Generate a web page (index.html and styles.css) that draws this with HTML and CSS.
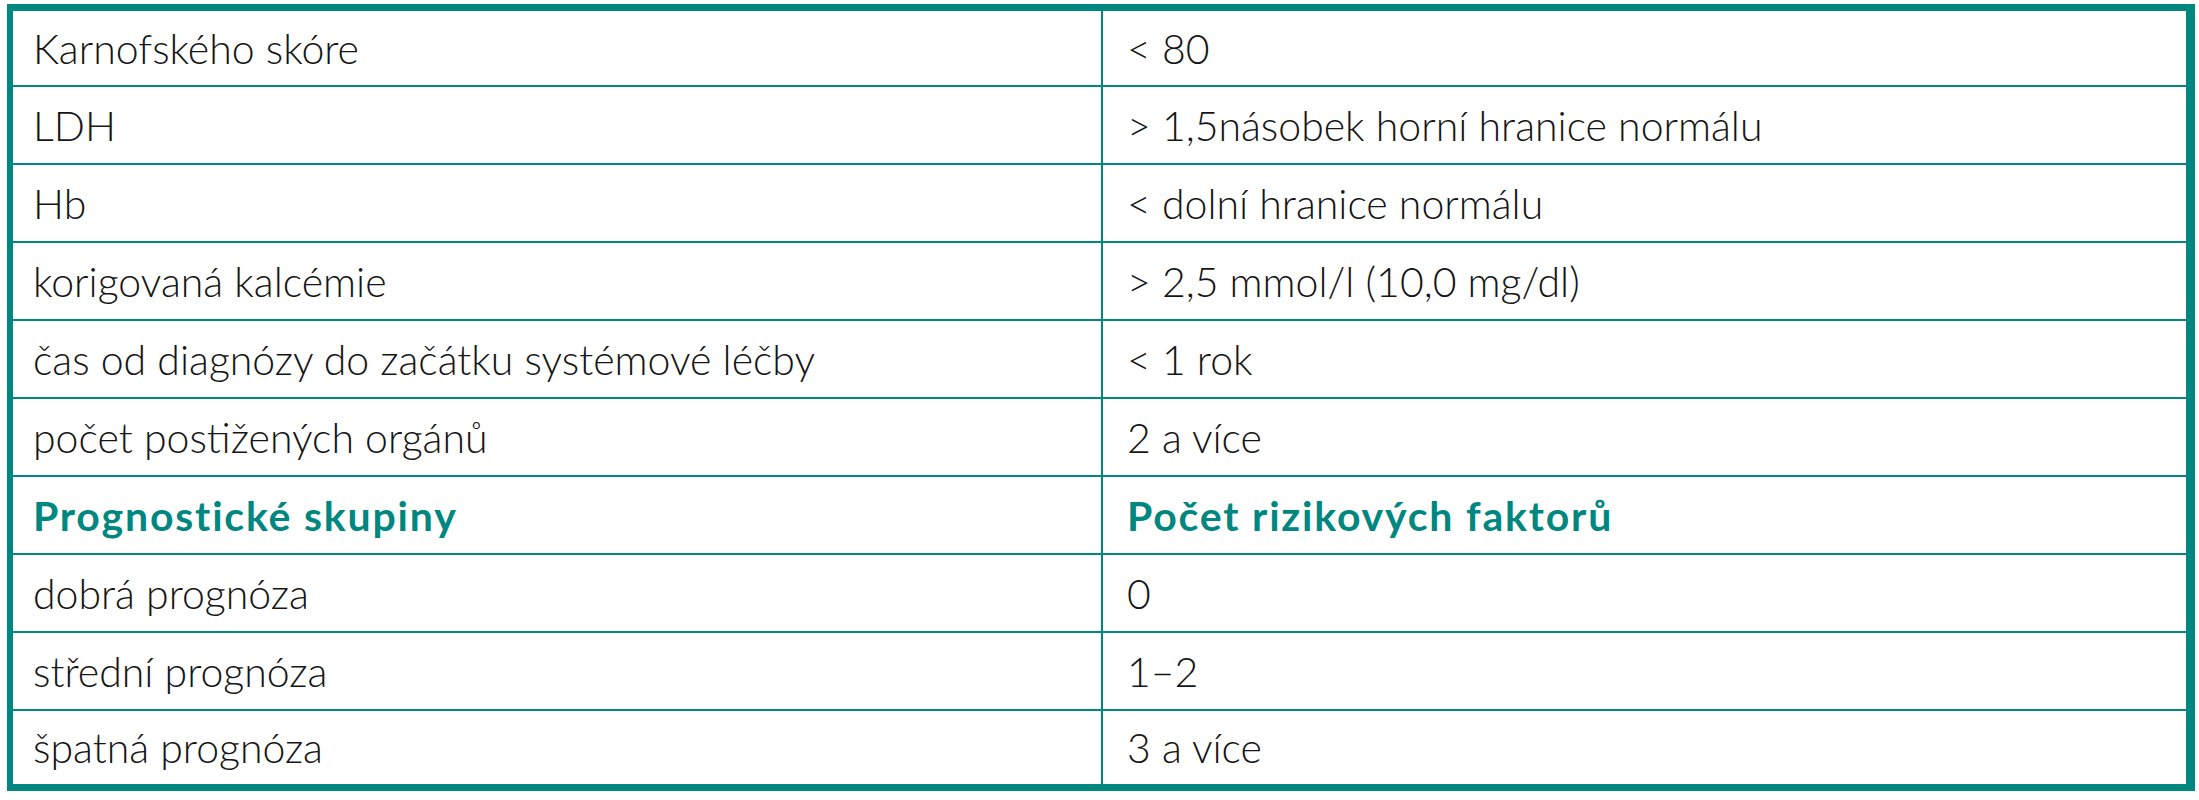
FILE: index.html
```html
<!DOCTYPE html>
<html lang="cs">
<head>
<meta charset="utf-8">
<title>Rizikové faktory</title>
<link rel="stylesheet" href="styles.css">
</head>
<body>
<table class="risk">
  <tbody>
    <tr class="row first"><td class="c1">Karnofského skóre</td><td class="c2">&lt; 80</td></tr>
    <tr class="row"><td class="c1">LDH</td><td class="c2">&gt; 1,5násobek horní hranice normálu</td></tr>
    <tr class="row"><td class="c1">Hb</td><td class="c2">&lt; dolní hranice normálu</td></tr>
    <tr class="row"><td class="c1">korigovaná kalcémie</td><td class="c2">&gt; 2,5 mmol/l (10,0 mg/dl)</td></tr>
    <tr class="row"><td class="c1">čas od diagnózy do začátku systémové léčby</td><td class="c2">&lt; 1 rok</td></tr>
    <tr class="row"><td class="c1">počet postižených orgánů</td><td class="c2">2 a více</td></tr>
    <tr class="row head"><td class="c1">Prognostické skupiny</td><td class="c2">Počet rizikových faktorů</td></tr>
    <tr class="row"><td class="c1">dobrá prognóza</td><td class="c2">0</td></tr>
    <tr class="row"><td class="c1">střední prognóza</td><td class="c2">1–2</td></tr>
    <tr class="row last"><td class="c1">špatná prognóza</td><td class="c2">3 a více</td></tr>
  </tbody>
</table>
</body>
</html>
```

FILE: styles.css
```css
html, body {
  margin: 0;
  padding: 0;
  background: #ffffff;
}

body {
  padding: 4px 0 0 7px;
  font-family: Lato, "Open Sans", "Liberation Sans", sans-serif;
  color: #151515;
}

.risk {
  width: 2188px;
  border-collapse: separate;
  border-spacing: 0;
  border-style: solid;
  border-color: #00877f;
  border-width: 7px 9px 7px 6px;
}

.risk td {
  height: 76px;
  padding: 0 0 0 20px;
  font-size: 41px;
  font-weight: 300;
  line-height: 1;
  vertical-align: middle;
  border-top: 2px solid #00877f;
  white-space: nowrap;
}

.risk .c1 {
  width: 1068px;
}

.risk .c2 {
  border-left: 2px solid #00877f;
  padding-left: 24px;
}

.risk .first td {
  border-top: 0;
  height: 74px;
}

.risk .last td {
  height: 73px;
}

.risk .head td {
  font-weight: 700;
  letter-spacing: 1.8px;
  color: #00877f;
}
```
